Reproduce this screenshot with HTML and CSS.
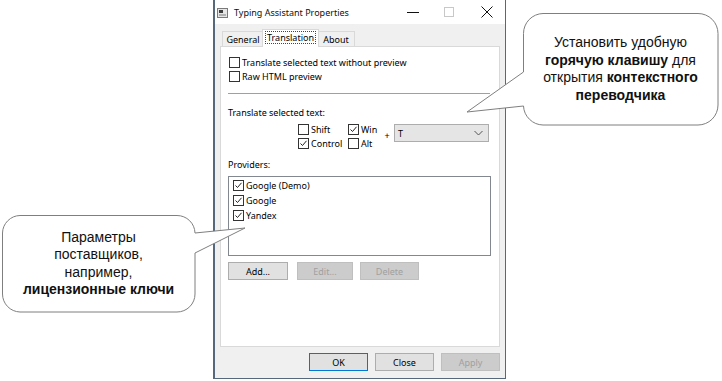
FILE: index.html
```html
<!DOCTYPE html>
<html lang="ru">
<head>
    <meta charset="UTF-8">
    <title>Typing Assistant Properties</title>
    <link rel="stylesheet" href="styles.css">
</head>
<body>

    <!-- dialog window -->
    <div class="window">
        <div class="titlebar">
            <svg class="appicon" width="11" height="10" viewBox="0 0 11 10">
                <rect x="0.5" y="0.5" width="10" height="9" fill="#e6e6e6" stroke="#7a7a7a"/>
                <rect x="2" y="2" width="4" height="3" fill="#3c3c3c"/>
                <rect x="2" y="6" width="7" height="2" fill="#b0b0b0"/>
            </svg>
            <span class="title">Typing Assistant Properties</span>
            <div class="controls">
                <span class="ctl"><svg width="12" height="12" viewBox="0 0 12 12"><path d="M0 6.5 H12" stroke="#111" stroke-width="1"/></svg></span>
                <span class="ctl"><svg width="11" height="11" viewBox="0 0 11 11"><rect x="0.5" y="0.5" width="9" height="9" fill="none" stroke="#c8c8c8"/></svg></span>
                <span class="ctl"><svg width="12" height="12" viewBox="0 0 12 12"><path d="M0.5 0.5 L11.5 11.5 M11.5 0.5 L0.5 11.5" stroke="#111" stroke-width="1"/></svg></span>
            </div>
        </div>

        <div class="client">
            <div class="tabs">
                <div class="tab tab-general">General</div>
                <div class="tab tab-active"><span class="focus">Translation</span></div>
                <div class="tab tab-about">About</div>
            </div>

            <div class="panel">
                <div class="row">
                    <span class="cb"></span>Translate selected text without preview
                </div>
                <div class="row">
                    <span class="cb"></span>Raw HTML preview
                </div>

                <div class="sep"></div>

                <div class="row label-row">Translate selected text:</div>

                <div class="hotkey">
                    <div class="keys">
                        <div class="row"><span class="cb"></span>Shift</div>
                        <div class="row"><span class="cb on"><svg width="9" height="9" viewBox="0 0 9 9"><path d="M1.5 4.5 L3.5 6.5 L7.5 1.8" fill="none" stroke="#222" stroke-width="1"/></svg></span>Win</div>
                        <div class="row"><span class="cb on"><svg width="9" height="9" viewBox="0 0 9 9"><path d="M1.5 4.5 L3.5 6.5 L7.5 1.8" fill="none" stroke="#222" stroke-width="1"/></svg></span>Control</div>
                        <div class="row"><span class="cb"></span>Alt</div>
                    </div>
                    <span class="plus">+</span>
                    <div class="combo">
                        <span>T</span>
                        <svg width="9" height="6" viewBox="0 0 9 6"><path d="M0.5 1 L4.5 5 L8.5 1" fill="none" stroke="#555" stroke-width="1"/></svg>
                    </div>
                </div>

                <div class="row label-row providers">Providers:</div>

                <div class="listbox">
                    <div class="item"><span class="cb on"><svg width="9" height="9" viewBox="0 0 9 9"><path d="M1.5 4.5 L3.5 6.5 L7.5 1.8" fill="none" stroke="#222" stroke-width="1"/></svg></span>Google (Demo)</div>
                    <div class="item"><span class="cb on"><svg width="9" height="9" viewBox="0 0 9 9"><path d="M1.5 4.5 L3.5 6.5 L7.5 1.8" fill="none" stroke="#222" stroke-width="1"/></svg></span>Google</div>
                    <div class="item"><span class="cb on"><svg width="9" height="9" viewBox="0 0 9 9"><path d="M1.5 4.5 L3.5 6.5 L7.5 1.8" fill="none" stroke="#222" stroke-width="1"/></svg></span>Yandex</div>
                </div>

                <div class="list-btns">
                    <button class="btn btn-add">Add...</button>
                    <button class="btn btn-edit" disabled>Edit...</button>
                    <button class="btn btn-delete" disabled>Delete</button>
                </div>
            </div>

            <div class="footer">
                <button class="btn btn-ok">OK</button>
                <button class="btn">Close</button>
                <button class="btn" disabled>Apply</button>
            </div>
        </div>
    </div>

    <!-- callouts -->
    <div class="callout callout-right">
        <svg class="bubble" width="262" height="122" viewBox="0 0 262 122">
            <path d="M83 5.5 H238 A20 20 0 0 1 258 25.5 V97 A20 20 0 0 1 238 117 H83 A20 20 0 0 1 63.5 98 L7 104 L63.5 64 V25.5 A20 20 0 0 1 83 5.5 Z" fill="#fff" stroke="#7f7f7f" stroke-width="1"/>
        </svg>
        <div class="callout-text">
            <p>Установить удобную<br>
            <b>горячую клавишу</b> для<br>
            открытия <b>контекстного</b><br>
            <b>переводчика</b></p>
        </div>
    </div>

    <div class="callout callout-left">
        <svg class="bubble" width="250" height="106" viewBox="0 0 250 106">
            <path d="M20 5.5 H177 A18 18 0 0 1 195 23 L245 18 L195 43 V84 A18 18 0 0 1 177 102 H20 A18 18 0 0 1 2.5 84 V23 A18 18 0 0 1 20 5.5 Z" fill="#fff" stroke="#7f7f7f" stroke-width="1"/>
        </svg>
        <div class="callout-text">
            <p>Параметры<br>
            поставщиков,<br>
            например,<br>
            <b>лицензионные ключи</b></p>
        </div>
    </div>

</body>
</html>
```

FILE: styles.css
```css
body{
    margin:0;
    width:722px;
    height:381px;
    background-color:#fff;
    position:relative;
    overflow:hidden;
    display:flex;
    padding-left:213px;
    box-sizing:border-box;
    font-family:"Noto Sans", sans-serif;
}

/* window */
.window{
    width:293px;
    height:379px;
    box-sizing:border-box;
    border:1px solid #56687c;
    border-top:none;
    border-left-width:2px;
    display:flex;
    flex-direction:column;
    background-color:#fff;
    font-size:9px;
    color:#000;
}
.titlebar{
    height:24px;
    display:flex;
    align-items:center;
    background-color:#fff;
}
.appicon{
    margin-left:2px;
    margin-top:1px;
}
.title{
    margin-left:6px;
    font-size:9px;
    color:#111;
}
.controls{
    margin-left:auto;
    display:flex;
}
.ctl{
    width:37px;
    height:24px;
    display:flex;
    align-items:center;
    justify-content:center;
}

.client{
    flex:1;
    background-color:#f0f0f0;
    padding:5px 5px 0 5px;
    display:flex;
    flex-direction:column;
}

/* tabs */
.tabs{
    display:flex;
    align-items:flex-end;
    padding-left:2px;
    height:17px;
}
.tab{
    height:15px;
    box-sizing:border-box;
    border:1px solid #d9d9d9;
    border-bottom:none;
    background-color:#f0f0f0;
    display:flex;
    align-items:center;
    justify-content:center;
    padding-top:1px;
}
.tab-general{ width:42px; }
.tab-about{ width:38px; }
.tab-active{
    width:57px;
    height:18px;
    margin:0 -2px -1px -2px;
    background-color:#fff;
    position:relative;
    z-index:1;
    padding-top:0;
    padding-bottom:2px;
}
.focus{
    border:1px dotted #444;
    padding:0 1px;
    line-height:11px;
}

/* tab page */
.panel{
    height:301px;
    box-sizing:border-box;
    border:1px solid #d9d9d9;
    background-color:#fff;
    padding:8px 8px 0 7px;
    display:flex;
    flex-direction:column;
}
.row{
    height:14px;
    display:flex;
    align-items:center;
    white-space:nowrap;
}
.cb{
    width:9px;
    height:9px;
    border:1px solid #333;
    background-color:#fff;
    margin:0 2px 0 1px;
    flex-shrink:0;
    display:flex;
}
.sep{
    height:1px;
    background-color:#a0a0a0;
    margin:10px 1px 0 0;
}
.label-row{ margin-top:11px; }
.providers{ margin-top:7px; }

.hotkey{
    display:flex;
    margin:3px 0 0 69px;
}
.keys{
    display:grid;
    grid-template-columns:50px 36px;
}
.plus{
    width:8px;
    text-align:center;
    line-height:28px;
}
.combo{
    margin:2px 0 0 3px;
    width:95px;
    height:18px;
    box-sizing:border-box;
    border:1px solid #adadad;
    background-color:#e5e5e5;
    display:flex;
    align-items:center;
    justify-content:space-between;
    padding:0 5px 0 3px;
}

.listbox{
    margin-top:5px;
    height:80px;
    box-sizing:border-box;
    border:1px solid #828790;
    background-color:#fff;
    padding:1px 0 0 3px;
}
.item{
    height:15px;
    display:flex;
    align-items:center;
}

.list-btns{
    display:flex;
    margin-top:6px;
}
.btn{
    height:18px;
    box-sizing:border-box;
    border:1px solid #adadad;
    background-color:#e1e1e1;
    font-family:inherit;
    font-size:9px;
    color:#000;
    padding:0;
    width:59px;
}
.btn:disabled{
    background-color:#cccccc;
    border-color:#bfbfbf;
    color:#a0a0a0;
}
.btn-add{ width:60px; }
.btn-edit{ width:56px; margin-left:9px; }
.btn-delete{ width:59px; margin-left:7px; }

.footer{
    display:flex;
    justify-content:flex-end;
    gap:7px;
    margin-top:6px;
}
.btn-ok{
    border-color:#0078d7;
}

/* callouts */
.callout{
    position:absolute;
    font-family:"Liberation Sans", Arial, sans-serif;
    font-size:14px;
    line-height:17.5px;
    color:#111;
}
.bubble{
    position:absolute;
    left:0;
    top:0;
}
.callout-text{
    position:absolute;
    text-align:center;
    display:flex;
    align-items:center;
    justify-content:center;
}
.callout-text p{
    margin:0;
    white-space:nowrap;
}
.callout-right{
    left:460px;
    top:8px;
    width:262px;
    height:122px;
}
.callout-right .callout-text{
    left:63px;
    top:5px;
    width:195px;
    height:112px;
}
.callout-left{
    left:0;
    top:210px;
    width:250px;
    height:106px;
}
.callout-left .callout-text{
    left:2px;
    top:5px;
    width:193px;
    height:97px;
}
```
